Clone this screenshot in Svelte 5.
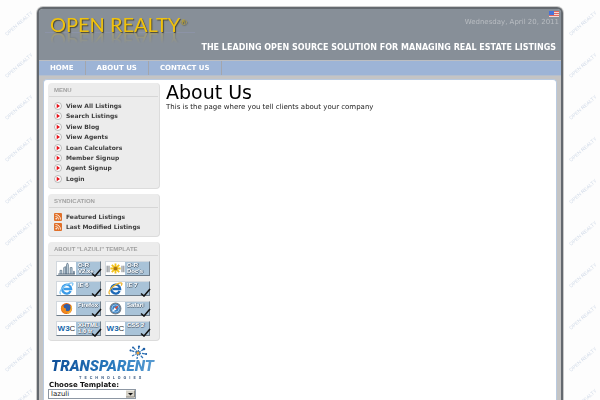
<script>
	const nav = ['Home', 'About Us', 'Contact Us'];

	const menu = [
		'View All Listings',
		'Search Listings',
		'View Blog',
		'View Agents',
		'Loan Calculators',
		'Member Signup',
		'Agent Signup',
		'Login'
	];

	const feeds = ['Featured Listings', 'Last Modified Listings'];

	const badges = [
		{ icon: 'city', lines: ['O-R', 'V2.x+'], check: true },
		{ icon: 'flower', lines: ['O-R', "Doc's"], check: false },
		{ icon: 'ie6', lines: ['IE 6'], check: true },
		{ icon: 'ie7', lines: ['IE 7'], check: true },
		{ icon: 'firefox', lines: ['Firefox'], check: true },
		{ icon: 'safari', lines: ['Safari'], check: true },
		{ icon: 'w3c', lines: ['XHTML', '1.0 tr'], check: true },
		{ icon: 'w3c', lines: ['CSS 2'], check: true }
	];

	let template = $state('lazuli');
</script>

<svelte:head>
	<title>About Us - Open Realty</title>
</svelte:head>

{#snippet badgeIcon(name)}
	{#if name === 'w3c'}
		<span class="w3c"><b>W3</b>C</span>
	{:else}
		<svg class="badge-icon" viewBox="0 0 20 14" aria-hidden="true">
			{#if name === 'city'}
				<path d="M3 13V9h2v4M7 13V6l2-1v8M10 13V3l1-2 1 2v10M14 13V6h2v7M17.500 13v-3h1v3" fill="#c3d3e0" stroke="#5a7186" stroke-width=".8" />
				<path d="M1 13h18" stroke="#4c6073" />
			{:else if name === 'flower'}
				<path d="M1 4v7M3 4v7M17 4v7M19 4v7" stroke="#6b7078" />
				<path d="M10 1.500v11M4.500 7h11M6 3l8 8M14 3l-8 8" stroke="#f2c21c" stroke-width="2" />
				<circle cx="10" cy="7" r="2" fill="#a8741a" />
			{:else if name === 'ie6' || name === 'ie7'}
				<path d="M14.500 9.800A4.800 4.800 0 1 1 15 7.500H7" fill="none" stroke={name === 'ie6' ? '#3a9be8' : '#1d69b8'} stroke-width="2.500" />
				<path d="M4 13C1 12 5 5 11 2.500S18 .8 16 4" fill="none" stroke={name === 'ie6' ? '#7cc3f4' : '#eeb32c'} stroke-width="1.300" />
			{:else if name === 'firefox'}
				<circle cx="10" cy="7" r="6" fill="#e56a17" />
				<circle cx="10.500" cy="6" r="3.900" fill="#315fa8" />
				<path d="M4.500 4c2 0 3 1 3 2.500 1 0 2 .5 2 1.500-1 1.500 1.500 2.500 4 1.500-1 3-5 3.500-7 1.500S4 7 4.500 4z" fill="#f08a1c" />
				<path d="M15 4c1 3-.5 7-4 8.300" stroke="#f6bb36" stroke-width="1.200" fill="none" />
			{:else}
				<circle cx="10" cy="7" r="5.800" fill="#3c82c4" stroke="#7a848e" stroke-width="1.200" />
				<circle cx="10" cy="7" r="3.900" fill="none" stroke="#b8dbf5" stroke-width=".8" />
				<path d="M13.500 3.500L9 6l2 2z" fill="#d84a3a" />
				<path d="M6.500 10.500L9 6l2 2z" fill="#fff" />
			{/if}
		</svg>
	{/if}
{/snippet}

<svg class="watermark" aria-hidden="true">
	<defs>
		<pattern id="marks" width="47" height="42" patternUnits="userSpaceOnUse">
			<text x="7" y="36" transform="rotate(-41 7 36)">OPEN REALTY</text>
		</pattern>
	</defs>
	<rect width="100%" height="100%" fill="url(#marks)" />
</svg>

<div class="page">
	<div class="frame">
		<header>
			<div class="brand" data-text="OPEN REALTY">OPEN REALTY<sup>®</sup></div>
			<div class="today">
				<svg viewBox="0 0 10 6" role="img" aria-label="English">
					<rect width="10" height="6" fill="#f3d9d6" />
					<path d="M0 .5h10M0 2.500h10M0 4.500h10" stroke="#e2675c" />
					<rect width="5" height="4" fill="#4773d8" />
				</svg>
				<time datetime="2011-04-20">Wednesday, April 20, 2011</time>
			</div>
			<p class="tagline">THE LEADING OPEN SOURCE SOLUTION FOR MANAGING REAL ESTATE LISTINGS</p>
		</header>

		<nav>
			{#each nav as item}
				<a href="#top">{item}</a>
			{/each}
		</nav>

		<div class="body">
			<aside>
				<section class="panel menu">
					<h2>MENU</h2>
					<ul>
						{#each menu as item}
							<li>
								<a href="#top">
									<svg viewBox="0 0 8 8" aria-hidden="true">
										<circle cx="4" cy="4" r="3.500" fill="#fff" stroke="#aaa" stroke-width=".8" />
										<path d="M2.700 1.800L6 4 2.700 6.200z" fill="#e60d16" />
									</svg>
									{item}
								</a>
							</li>
						{/each}
					</ul>
				</section>

				<section class="panel">
					<h2>SYNDICATION</h2>
					<ul>
						{#each feeds as feed}
							<li>
								<a href="#top">
									<svg viewBox="0 0 8 8" aria-hidden="true">
										<rect width="8" height="8" rx="1" fill="#e0702a" />
										<circle cx="2.200" cy="5.800" r=".8" fill="#fff" />
										<path d="M1.500 3.500a3 3 0 0 1 3 3M1.500 1.500a5 5 0 0 1 5 5" fill="none" stroke="#fff" stroke-width=".8" />
									</svg>
									{feed}
								</a>
							</li>
						{/each}
					</ul>
				</section>

				<section class="panel">
					<h2>ABOUT "LAZULI" TEMPLATE</h2>
					<div class="badges">
						{#each badges as badge}
							<a class="badge" href="#top">
								<span class="pic">{@render badgeIcon(badge.icon)}</span>
								<span class="caption">
									{#each badge.lines as line}
										<span>{line}</span>
									{/each}
								</span>
								{#if badge.check}
									<svg class="check" viewBox="0 0 11 9" aria-hidden="true">
										<path d="M1 5.500l3 2.500L10 1" fill="none" stroke="#111" stroke-width="1.600" />
									</svg>
								{/if}
							</a>
						{/each}
					</div>
				</section>

				<a class="sponsor" href="#top">
					<svg class="star" viewBox="0 0 20 16" aria-hidden="true">
						<path d="M10 8L2 5M10 8L5 2M10 8l1-7M10 8l6-4M10 8l9 1M10 8l5 5M10 8l-1 6M10 8l-6 3" stroke="#2f73b5" stroke-width="1.300" stroke-dasharray="3 1" />
						<g fill="#1d5ea6">
							<circle cx="5" cy="2.500" r="1" />
							<circle cx="11" cy="1.500" r="1.100" />
							<circle cx="16" cy="4" r="1.300" />
							<circle cx="18" cy="9" r="1" />
							<circle cx="2.500" cy="5.500" r="1" />
						</g>
						<circle cx="10" cy="8" r="1.500" fill="#f2a33a" />
					</svg>
					<span class="sponsor-name">TRANSPARENT</span>
					<span class="sponsor-sub">TECHNOLOGIES</span>
				</a>

				<form>
					<label for="template">Choose Template:</label>
					<span class="picker">
						<select id="template" bind:value={template}>
							<option value="lazuli">lazuli</option>
						</select>
						<svg viewBox="0 0 9 7" aria-hidden="true">
							<path d="M0 0h9v7H0z" fill="#d6d2c8" />
							<path d="M0 6.500h8.500V0" fill="none" stroke="#8b877e" />
							<path d="M2 2.500h5L4.500 5z" fill="#111" />
						</svg>
					</span>
				</form>
			</aside>

			<main>
				<h1>About Us</h1>
				<p>This is the page where you tell clients about your company</p>
			</main>
		</div>
	</div>
</div>

<style>
	:global(body) {
		background: #fdfdfd;
		font-family: Verdana, 'DejaVu Sans', sans-serif;
		font-size: 7px;
		color: #222;
	}

	a {
		color: inherit;
		text-decoration: none;
	}

	/* faint diagonal marks behind the page */
	.watermark {
		position: fixed;
		inset: 0;
		width: 100%;
		height: 100%;
	}

	.watermark text {
		font-family: 'Liberation Sans', sans-serif;
		font-size: 5px;
		fill: #d2dbe9;
	}

	.page {
		position: relative;
		display: flex;
		min-height: 100vh;
		box-sizing: border-box;
		padding: 7px 37px 0;
	}

	.frame {
		flex: 1;
		display: flex;
		flex-direction: column;
		background: #c4c4c4;
		border: 2px solid #63686e;
		border-bottom: 0;
		border-radius: 6px 6px 0 0;
		box-shadow: 0 0 0 1px #c9c9c9;
	}

	header {
		display: grid;
		grid-template-columns: auto 1fr;
		grid-template-rows: 24px auto;
		height: 52px;
		box-sizing: border-box;
		border-bottom: 1px solid #bcbec1;
		border-radius: 4px 4px 0 0;
		background: #878f98;
	}

	.brand {
		position: relative;
		margin-left: 6px;
		padding: 3px 8px 0 5px;
		border-bottom: 1px solid #8c93a6;
		font-family: Lato, sans-serif;
		font-size: 20px;
		line-height: 24px;
		height: 20px;
		color: #f0c20e;
		text-shadow: 1px 1px 1px #4c4a38;
	}

	.brand sup {
		font-size: 8px;
		line-height: 8px;
		vertical-align: 7px;
		color: #c9a81c;
	}

	.brand::after {
		content: attr(data-text);
		position: absolute;
		left: 5px;
		top: 20px;
		transform: scaleY(-1);
		opacity: 0.3;
		mask-image: linear-gradient(to top, #000 10%, transparent 60%);
	}

	.today {
		display: flex;
		flex-direction: column;
		align-items: flex-end;
		gap: 1px;
		padding: 2px 2px 0 0;
		line-height: 8px;
		color: #b9bdc2;
	}

	.today svg {
		width: 10px;
		height: 6px;
	}

	.tagline {
		grid-column: 1 / -1;
		margin: 9px 5px 0 0;
		text-align: right;
		font-size: 8px;
		font-weight: bold;
		line-height: 12px;
		color: #fff;
	}

	nav {
		display: flex;
		background: #9db4d6;
		border-bottom: 1px solid #b4bfce;
		text-transform: uppercase;
		font-weight: bold;
		line-height: 14px;
		color: #fff;
	}

	nav a {
		padding: 0 11px;
		border-right: 1px solid #a3a6ad;
	}

	.body {
		flex: 1;
		display: flex;
		gap: 6px;
		margin: 3px 4px 0;
		padding: 3px 4px 0;
		border: 1px solid #b9cae0;
		border-bottom: 0;
		border-radius: 4px 4px 0 0;
		background: #fff;
	}

	aside {
		flex: none;
		width: 112px;
	}

	.panel {
		display: flex;
		flex-direction: column;
		box-sizing: border-box;
		margin-bottom: 5px;
		padding-bottom: 4px;
		border-right: 1px solid #dcdcdc;
		border-bottom: 1px solid #dcdcdc;
		border-radius: 4px;
		background: #ececec;
	}

	.menu {
		min-height: 106px;
	}

	h2 {
		margin: 0 1px 4px;
		padding: 1px 5px 0;
		border-bottom: 1px solid #d6d6d6;
		font-family: 'Liberation Sans', Arial, sans-serif;
		font-size: 6px;
		line-height: 12px;
		color: #a2a2a2;
	}

	ul {
		flex: 1;
		display: flex;
		flex-direction: column;
		margin: 0;
		padding: 0 0 0 6px;
		list-style: none;
		font-size: 6px;
		font-weight: bold;
		line-height: 10px;
		color: #3d3d3d;
	}

	li {
		flex: 1;
	}

	li a {
		display: flex;
		align-items: center;
		gap: 4px;
	}

	li svg {
		width: 8px;
		height: 8px;
	}

	.badges {
		display: grid;
		grid-template-columns: 45px 45px;
		gap: 5px 4px;
		padding: 1px 0 0 8px;
	}

	.badge {
		position: relative;
		display: flex;
		height: 15px;
		box-sizing: border-box;
		border: 1px solid #d2d8de;
		border-right-color: #6f7d8a;
		border-bottom-color: #6f7d8a;
		background: #a9c3d8;
	}

	.pic {
		display: flex;
		align-items: center;
		justify-content: center;
		width: 19px;
		background: #fff;
	}

	.badge-icon {
		width: 19px;
		height: 13px;
	}

	.w3c {
		font-family: 'Liberation Sans', Arial, sans-serif;
		font-size: 8px;
		color: #333;
	}

	.w3c b {
		color: #1466ac;
	}

	.caption {
		display: flex;
		flex-direction: column;
		padding-left: 2px;
		font-family: 'Liberation Sans', Arial, sans-serif;
		font-size: 6px;
		font-weight: bold;
		line-height: 6px;
		color: #fff;
		text-shadow: 1px 0 0 #5d6f80, 0 1px 0 #5d6f80;
	}

	.check {
		position: absolute;
		right: -2px;
		bottom: -2px;
		width: 11px;
		height: 9px;
	}

	.sponsor {
		position: relative;
		display: flex;
		flex-direction: column;
		margin: 16px 0 1px 3px;
		font-family: Roboto, sans-serif;
	}

	.star {
		position: absolute;
		right: 12px;
		top: -12px;
		width: 20px;
		height: 16px;
	}

	.sponsor-name {
		font-size: 15px;
		font-weight: 900;
		font-style: italic;
		line-height: 18px;
		color: transparent;
		background: linear-gradient(90deg, #0f4f98, #2b7cc0 60%, #5fa0d4);
		background-clip: text;
	}

	.sponsor-sub {
		padding-left: 28px;
		font-size: 4px;
		font-weight: bold;
		letter-spacing: 3px;
		line-height: 5px;
		color: #3f5f86;
	}

	form {
		display: flex;
		flex-direction: column;
		align-items: flex-start;
	}

	label {
		padding-left: 1px;
		font-weight: bold;
		line-height: 8px;
		color: #111;
	}

	.picker {
		position: relative;
		width: 88px;
		height: 10px;
	}

	select {
		display: block;
		width: 100%;
		height: 10px;
		padding: 0 0 0 2px;
		appearance: none;
		border: 1px solid #8d97a3;
		border-radius: 0;
		background: #fff;
		font-family: inherit;
		font-size: 7px;
		line-height: 8px;
		color: #222;
	}

	.picker svg {
		position: absolute;
		right: 1px;
		top: 1px;
		width: 9px;
		height: 8px;
		pointer-events: none;
	}

	h1 {
		margin: 0;
		font-size: 19px;
		font-weight: normal;
		line-height: 18px;
		color: #000;
	}

	main p {
		margin: 0;
		line-height: 12px;
	}
</style>
